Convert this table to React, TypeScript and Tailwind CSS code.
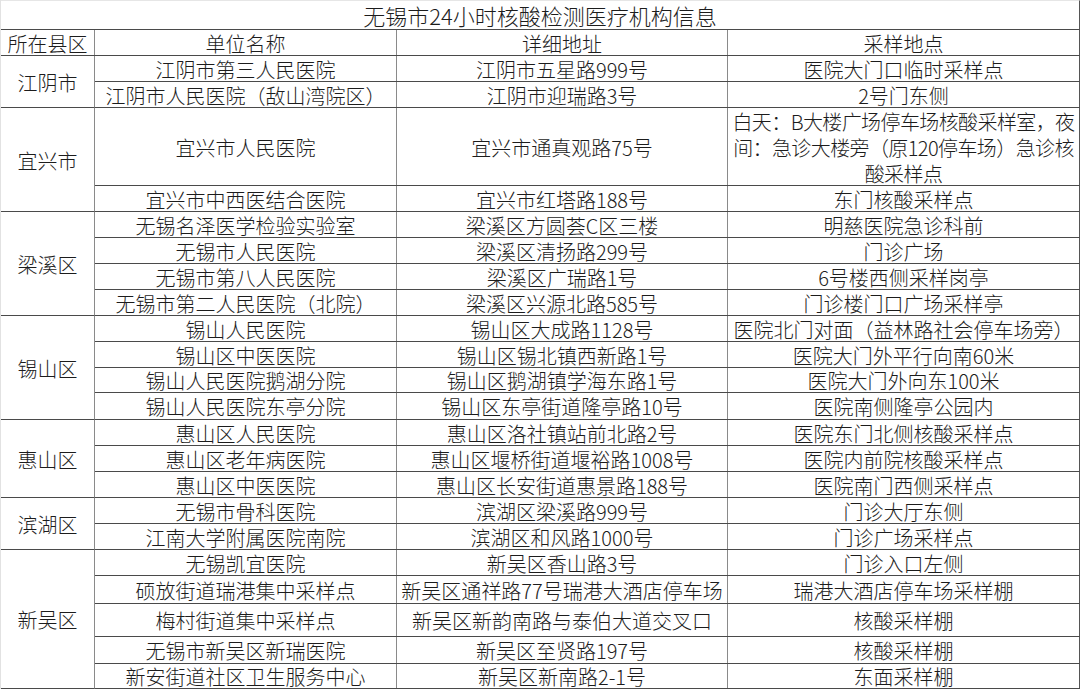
import React from "react";

type Row = { h: number; name: string; addr: string; site: React.ReactNode; tight?: boolean };
type Group = { district: string; rows: Row[] };

const groups: Group[] = [
  {
    district: "江阴市",
    rows: [
      { h: 26, name: "江阴市第三人民医院", addr: "江阴市五星路999号", site: "医院大门口临时采样点" },
      { h: 26, name: "江阴市人民医院（敌山湾院区）", addr: "江阴市迎瑞路3号", site: "2号门东侧" },
    ],
  },
  {
    district: "宜兴市",
    rows: [
      {
        h: 78,
        name: "宜兴市人民医院",
        addr: "宜兴市通真观路75号",
        site: (
          <>
            白天：B大楼广场停车场核酸采样室，夜
            <br />
            间：急诊大楼旁（原120停车场）急诊核
            <br />
            酸采样点
          </>
        ),
        tight: true,
      },
      { h: 26, name: "宜兴市中西医结合医院", addr: "宜兴市红塔路188号", site: "东门核酸采样点" },
    ],
  },
  {
    district: "梁溪区",
    rows: [
      { h: 26, name: "无锡名泽医学检验实验室", addr: "梁溪区方圆荟C区三楼", site: "明慈医院急诊科前" },
      { h: 26, name: "无锡市人民医院", addr: "梁溪区清扬路299号", site: "门诊广场" },
      { h: 26, name: "无锡市第八人民医院", addr: "梁溪区广瑞路1号", site: "6号楼西侧采样岗亭" },
      { h: 26, name: "无锡市第二人民医院（北院）", addr: "梁溪区兴源北路585号", site: "门诊楼门口广场采样亭" },
    ],
  },
  {
    district: "锡山区",
    rows: [
      { h: 26, name: "锡山人民医院", addr: "锡山区大成路1128号", site: "医院北门对面（益林路社会停车场旁）" },
      { h: 26, name: "锡山区中医医院", addr: "锡山区锡北镇西新路1号", site: "医院大门外平行向南60米" },
      { h: 25, name: "锡山人民医院鹅湖分院", addr: "锡山区鹅湖镇学海东路1号", site: "医院大门外向东100米" },
      { h: 27, name: "锡山人民医院东亭分院", addr: "锡山区东亭街道隆亭路10号", site: "医院南侧隆亭公园内" },
    ],
  },
  {
    district: "惠山区",
    rows: [
      { h: 26, name: "惠山区人民医院", addr: "惠山区洛社镇站前北路2号", site: "医院东门北侧核酸采样点" },
      { h: 26, name: "惠山区老年病医院", addr: "惠山区堰桥街道堰裕路1008号", site: "医院内前院核酸采样点" },
      { h: 26, name: "惠山区中医医院", addr: "惠山区长安街道惠景路188号", site: "医院南门西侧采样点" },
    ],
  },
  {
    district: "滨湖区",
    rows: [
      { h: 26, name: "无锡市骨科医院", addr: "滨湖区梁溪路999号", site: "门诊大厅东侧" },
      { h: 26, name: "江南大学附属医院南院", addr: "滨湖区和风路1000号", site: "门诊广场采样点" },
    ],
  },
  {
    district: "新吴区",
    rows: [
      { h: 26, name: "无锡凯宜医院", addr: "新吴区香山路3号", site: "门诊入口左侧" },
      { h: 28, name: "硕放街道瑞港集中采样点", addr: "新吴区通祥路77号瑞港大酒店停车场", site: "瑞港大酒店停车场采样棚" },
      { h: 33, name: "梅村街道集中采样点", addr: "新吴区新韵南路与泰伯大道交叉口", site: "核酸采样棚" },
      { h: 27, name: "无锡市新吴区新瑞医院", addr: "新吴区至贤路197号", site: "核酸采样棚" },
      { h: 25, name: "新安街道社区卫生服务中心", addr: "新吴区新南路2-1号", site: "东面采样棚" },
    ],
  },
];

const font = {
  fontFamily: '"Noto Sans CJK SC", "Noto Sans", sans-serif',
};

function Cell({
  w,
  children,
  last,
  tight,
}: {
  w: string;
  children: React.ReactNode;
  last?: boolean;
  tight?: boolean;
}) {
  return (
    <div
      className={`${w} shrink-0 flex items-center justify-center text-center whitespace-nowrap overflow-visible pt-[2px] ${
        last ? "border-r border-[#555]" : "border-r border-[#8a8a8a]"
      } ${tight ? "tracking-[-0.6px] leading-[26px]" : "leading-[22px]"}`}
    >
      <div>{children}</div>
    </div>
  );
}

export default function App() {
  return (
    <div
      className="w-[1080px] h-[689px] bg-white text-[#1c1c1c] text-[20px] font-light overflow-hidden"
      style={font}
    >
      <div className="w-[1080px] border-l border-[#e2e2e2]">
        {/* Title */}
        <div className="h-[30px] w-[1079px] flex items-center justify-center border-t border-t-[#e6e6e6] border-b border-b-[#4a4a4a] border-r border-r-[#555] text-[22px] leading-[28px]">
          无锡市24小时核酸检测医疗机构信息
        </div>
        {/* Header */}
        <div className="h-[26px] flex border-b border-[#4a4a4a]">
          <Cell w="w-[94px]">所在县区</Cell>
          <Cell w="w-[302px]">单位名称</Cell>
          <Cell w="w-[331px]">详细地址</Cell>
          <Cell w="w-[352px]" last>
            采样地点
          </Cell>
        </div>
        {groups.map((g) => {
          const total = g.rows.reduce((s, r) => s + r.h, 0);
          return (
            <div key={g.district} className="flex" style={{ height: total }}>
              <div className="w-[94px] shrink-0 flex items-center justify-center border-r border-r-[#8a8a8a] border-b border-b-[#4a4a4a] pt-[2px]">
                {g.district}
              </div>
              <div className="flex flex-col">
                {g.rows.map((r, i) => (
                  <div
                    key={i}
                    className="flex border-b border-[#4a4a4a]"
                    style={{ height: r.h }}
                  >
                    <Cell w="w-[302px]">{r.name}</Cell>
                    <Cell w="w-[331px]">{r.addr}</Cell>
                    <Cell w="w-[352px]" last tight={r.tight}>
                      {r.site}
                    </Cell>
                  </div>
                ))}
              </div>
            </div>
          );
        })}
      </div>
    </div>
  );
}
